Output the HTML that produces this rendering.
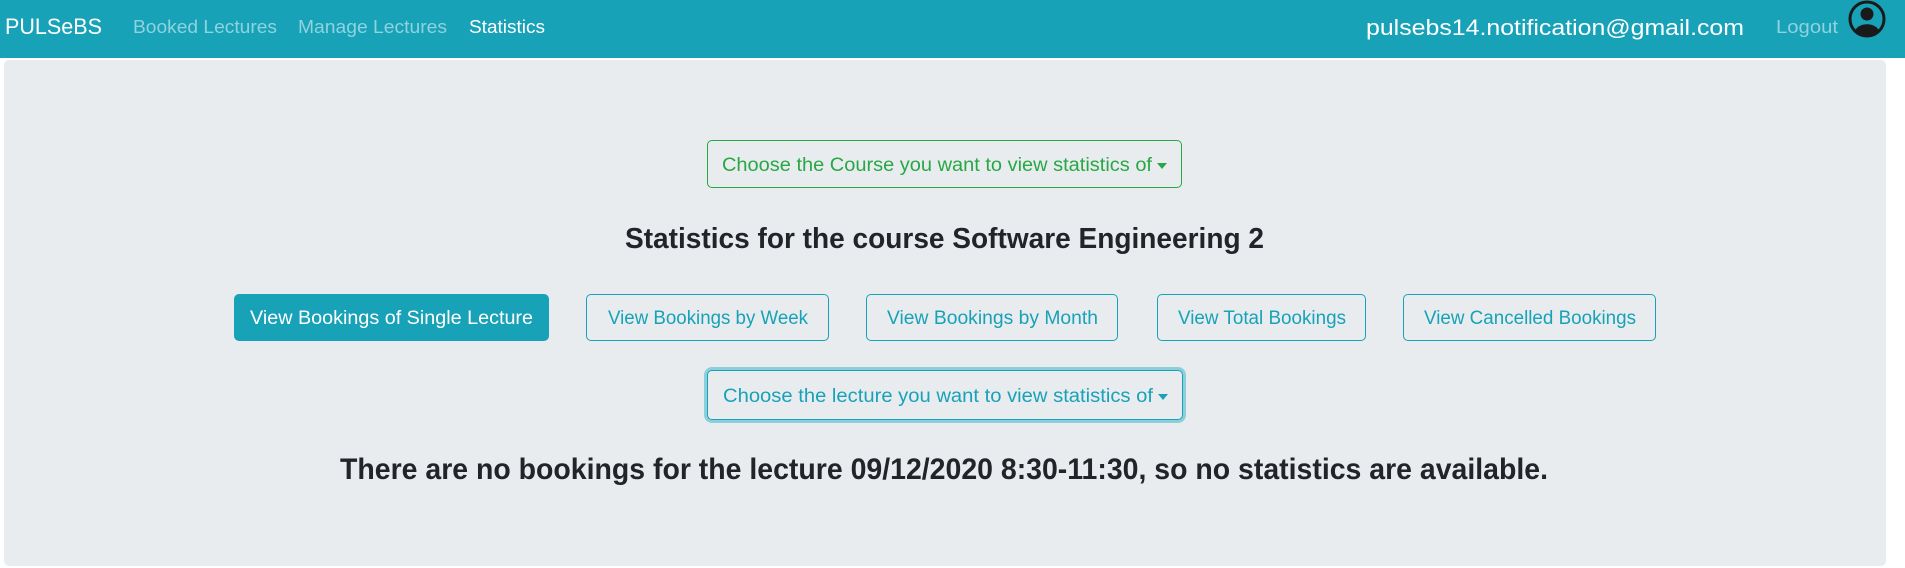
<!DOCTYPE html>
<html><head><meta charset="utf-8"><style>
*{margin:0;padding:0;box-sizing:border-box}
body{width:1905px;height:568px;background:#fff;font-family:"Liberation Sans",sans-serif;position:relative;overflow:hidden}
.nav{position:absolute;left:0;top:0;width:1905px;height:58px;background:#17a2b8}
.abs{position:absolute;white-space:nowrap}
.fit{display:inline-block;transform-origin:left center}
.box{position:absolute;left:4px;top:60px;width:1882px;height:506px;background:#e9ecef;border-radius:5px}
.btn{position:absolute;border:1px solid #17a2b8;border-radius:5px;color:#17a2b8;font-size:19px;display:flex;align-items:center;justify-content:center;padding-top:3px}
.caret{display:inline-block;width:0;height:0;border-left:5px solid transparent;border-right:5px solid transparent;border-top:6px solid currentColor;margin-left:5px;vertical-align:3px}
</style></head><body>
<div class="nav"></div>
<div class="abs" style="left:5px;top:14px;color:#fff;font-size:22px"><span class="fit" id="t1">PULSeBS</span></div>
<div class="abs" style="left:133px;top:17px;color:#8fd3df;font-size:18px"><span class="fit" id="t2">Booked Lectures</span></div>
<div class="abs" style="left:298px;top:17px;color:#8fd3df;font-size:18px"><span class="fit" id="t3">Manage Lectures</span></div>
<div class="abs" style="left:469px;top:17px;color:#fff;font-size:18px"><span class="fit" id="t4">Statistics</span></div>
<div class="abs" style="left:1366px;top:15px;color:#fff;font-size:22px"><span class="fit" id="t5">pulsebs14.notification@gmail.com</span></div>
<div class="abs" style="left:1776px;top:17px;color:#8fd3df;font-size:18px"><span class="fit" id="t6">Logout</span></div>
<svg class="abs" style="left:1848px;top:0" width="38" height="38" viewBox="0 0 38 38">
<circle cx="19" cy="19" r="17" fill="none" stroke="#1a1a1a" stroke-width="3"/>
<circle cx="19" cy="14" r="6.5" fill="#1a1a1a"/>
<path d="M7 31 C10 22 28 22 31 31 C26 36 12 36 7 31Z" fill="#1a1a1a"/>
</svg>
<div class="box"></div>
<div class="btn" style="left:707px;top:140px;width:475px;height:48px;border-color:#28a745;color:#28a745"><span class="fit" id="t7">Choose the Course you want to view statistics of</span><span class="caret"></span></div>
<div class="abs" style="left:625px;top:223px;font-size:29px;font-weight:bold;color:#212529"><span class="fit" id="t8">Statistics for the course Software Engineering 2</span></div>
<div class="btn" style="left:234px;top:294px;width:315px;height:47px;background:#17a2b8;color:#fff"><span class="fit" id="t9">View Bookings of Single Lecture</span></div>
<div class="btn" style="left:586px;top:294px;width:243px;height:47px"><span class="fit" id="t10">View Bookings by Week</span></div>
<div class="btn" style="left:866px;top:294px;width:252px;height:47px"><span class="fit" id="t11">View Bookings by Month</span></div>
<div class="btn" style="left:1157px;top:294px;width:209px;height:47px"><span class="fit" id="t12">View Total Bookings</span></div>
<div class="btn" style="left:1403px;top:294px;width:253px;height:47px"><span class="fit" id="t13">View Cancelled Bookings</span></div>
<div class="btn" style="left:707px;top:370px;width:476px;height:50px;box-shadow:0 0 0 3px #8ccfdb"><span class="fit" id="t14">Choose the lecture you want to view statistics of</span><span class="caret"></span></div>
<div class="abs" style="left:340px;top:453px;font-size:30px;font-weight:bold;color:#212529"><span class="fit" id="t15">There are no bookings for the lecture 09/12/2020 8:30-11:30, so no statistics are available.</span></div>
<script>
var W={t1:97,t2:144,t3:149,t4:76,t5:378,t6:62,t7:430,t8:639,t9:283,t10:200,t11:211,t12:168,t13:212,t14:430,t15:1208};
for(var k in W){var e=document.getElementById(k);var w=e.getBoundingClientRect().width;var s=W[k]/w;e.style.transform='scaleX('+s+')';if(e.parentNode.classList.contains('btn')){e.style.marginRight=(W[k]-w)+'px';}}
</script>
</body></html>
